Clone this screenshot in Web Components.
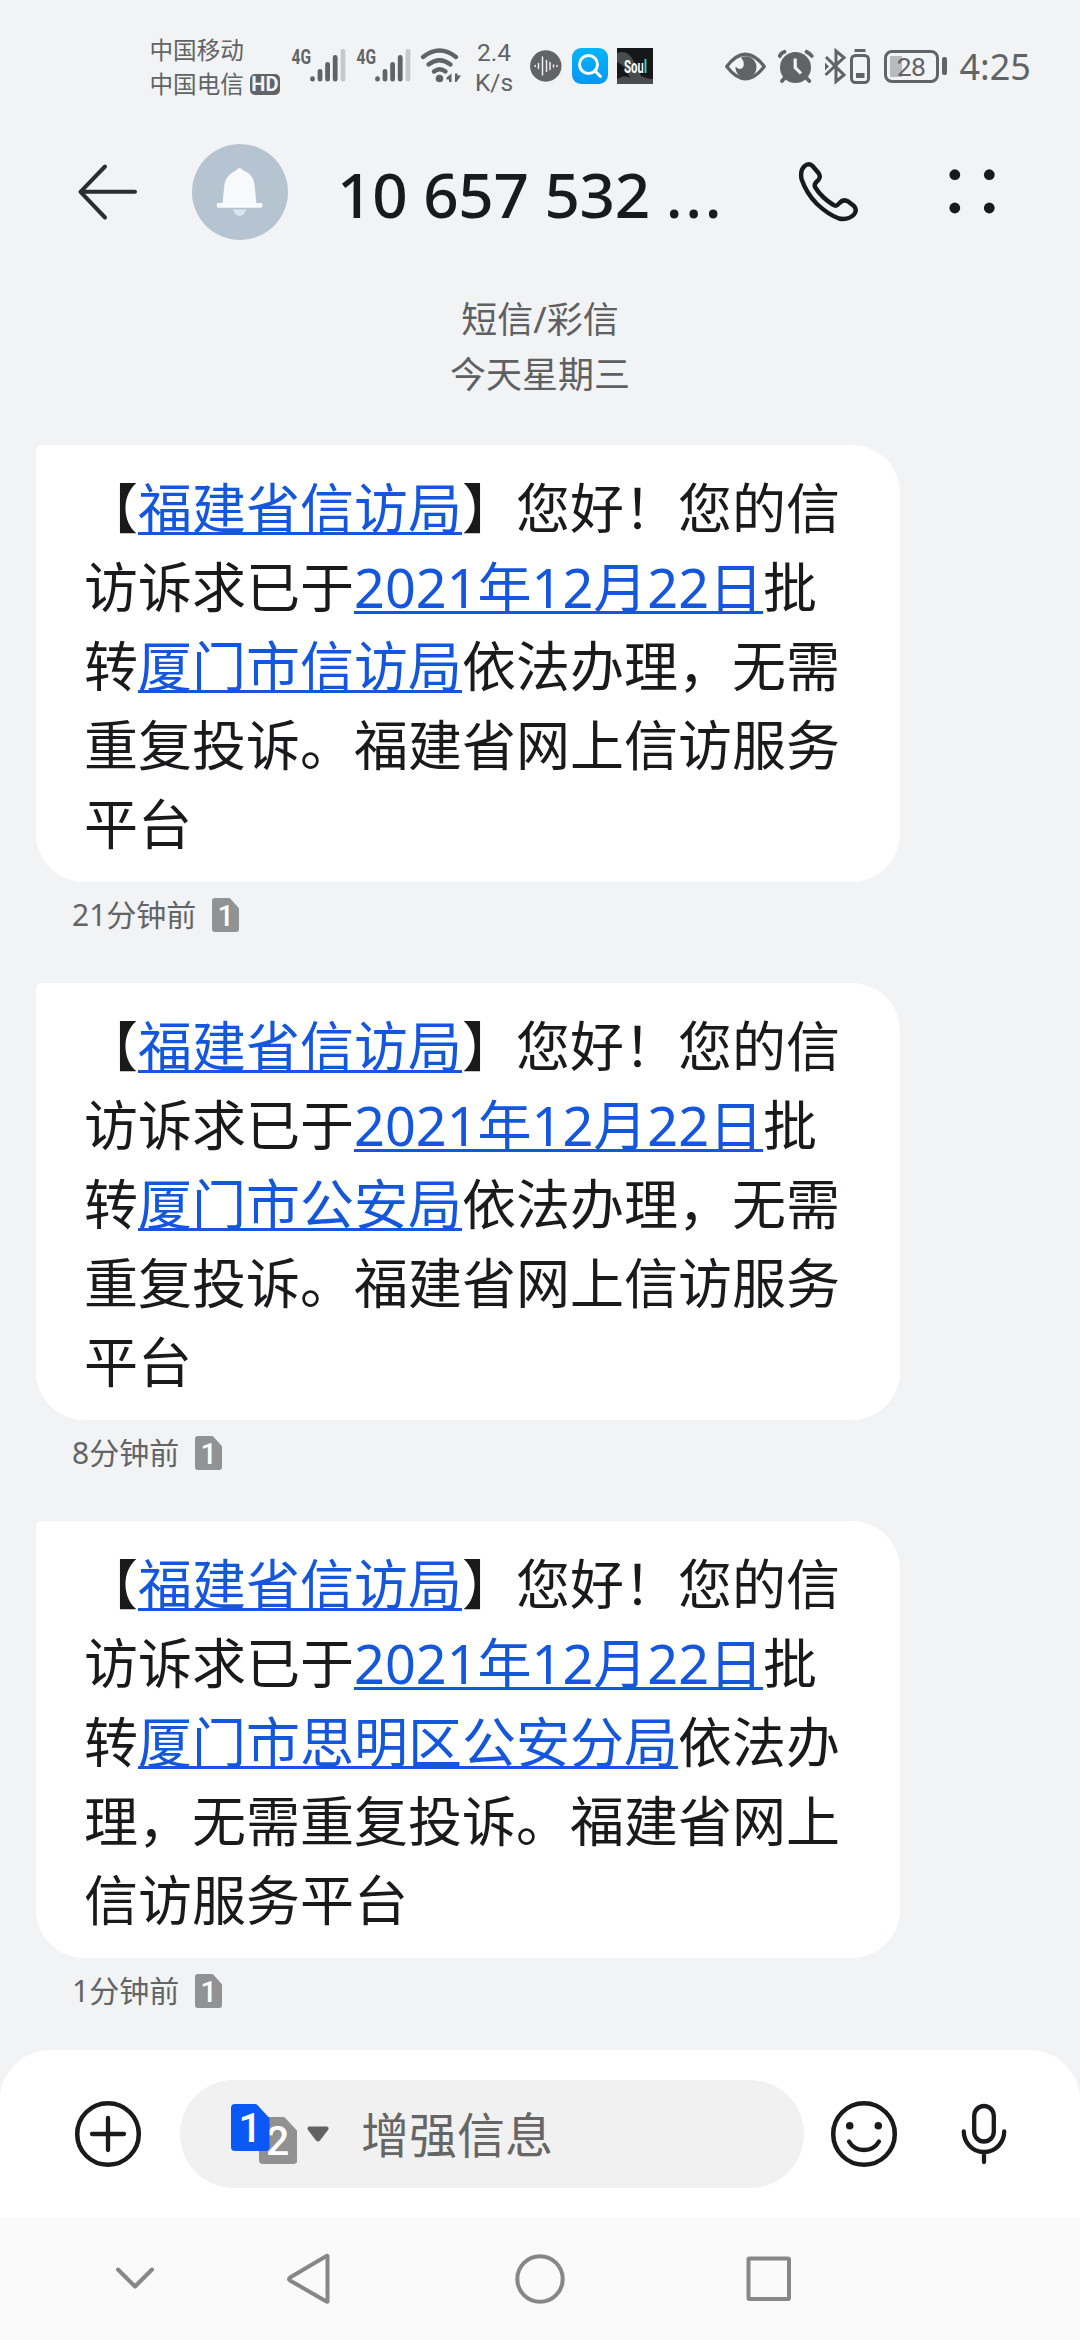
<!DOCTYPE html>
<html lang="zh-CN">
<head>
<meta charset="utf-8">
<title>10 657 532 ...</title>
<style>
html,body{margin:0;padding:0}
body{width:1080px;height:2340px;overflow:hidden;background:#f1f3f5;color:#191a1c;font-family:"Noto Sans","Noto Sans CJK SC",sans-serif;text-spacing-trim:space-all}
</style>
</head>
<body>
<sms-app></sms-app>
<script>
const define = (name, html) => {
  const t = document.createElement('template');
  t.innerHTML = html;
  customElements.define(name, class extends HTMLElement {
    constructor() {
      super();
      this.attachShadow({ mode: 'open' }).append(t.content.cloneNode(true));
    }
  });
};

/* Cellular signal meter with network label */
define('signal-meter', `
<style>:host{display:block;width:54px;height:36px}svg{display:block;overflow:visible}</style>
<svg width="54" height="36" viewBox="0 0 54 36">
  <text x="-.5" y="16" font-family="Roboto,sans-serif" font-weight="700" font-size="20.5" textLength="19.5" lengthAdjust="spacingAndGlyphs" fill="#626365">4G</text>
  <g stroke="#626365" stroke-width="4.8" stroke-linecap="round"><path d="M20.5 31.2V30.7M28 31.2V23.3M35.6 31.2V16.3M43.2 31.2V9.3"/><path d="M51 31.2V3.3" stroke="#c7c8ca"/></g>
</svg>`);

/* SIM card tag; --fill, --w, --h and --fs are set by the user of the element */
define('sim-tag', `
<style>
:host{display:block;width:var(--w,27px);height:var(--h,34px)}
svg{display:block;width:100%;height:100%}
.n{position:relative;margin-top:calc(var(--h,34px) * -1);height:var(--h,34px);line-height:calc(var(--h,34px) + 2px);text-align:center;color:#fff;font-family:Roboto,sans-serif;font-size:var(--fs,29px);font-weight:500}
</style>
<svg viewBox="0 0 38 47" preserveAspectRatio="none"><path d="M4 0H24Q25 0 26 1L37 13Q38 14 38 15V43Q38 47 34 47H4Q0 47 0 43V4Q0 0 4 0Z" fill="var(--fill,#919294)"/></svg>
<div class="n"><slot></slot></div>`);

define('status-bar', `
<style>
:host{display:flex;height:132px;align-items:flex-start;color:#626365;box-sizing:border-box}
svg{display:block;flex:none;overflow:visible}
.carriers{margin-left:149.5px;padding-top:33px;width:142.5px;flex:none;font-size:23.6px;line-height:34px;font-weight:400;white-space:nowrap}
.row{display:flex;align-items:center}
.hd{margin-left:6px;width:30px;height:21px;border-radius:5px;background:#626365;color:#f1f3f5;font:700 20px/21px Roboto,sans-serif;text-align:center}
signal-meter{margin-top:48px;flex:none}
.rate{margin-left:12px;width:42px;padding-top:38px;font:400 24.5px/29.5px Roboto,sans-serif;text-align:center;flex:none}
.i{margin-top:48px}
.pct{display:flex;flex:none;margin:50px 0 0 12.5px;width:55px;height:33px;box-sizing:border-box;border:3px solid #626365;border-radius:8px;background:linear-gradient(#b9babc,#b9babc) 3px 3px/12px 21px no-repeat;justify-content:center;font-family:Roboto,sans-serif;font-size:26.5px;line-height:28px;font-weight:400;letter-spacing:-.6px}
.nub{flex:none;width:4.5px;height:18px;border-radius:2px;background:#626365;margin:57px 0 0 3.5px}
.time{margin:42px 0 0 13px;font-size:36px;line-height:50px;font-weight:400}
</style>
<div class="carriers"><div>中国移动</div><div class="row">中国电信<div class="hd">HD</div></div></div>
<signal-meter></signal-meter>
<signal-meter style="margin-left:11px"></signal-meter>
<svg class="i" style="margin-left:9px" width="41" height="36" viewBox="420 48 41 36">
  <g fill="none" stroke="#626365" stroke-width="4.4" stroke-linecap="round"><path d="M423 57Q439.500 44 456 57M428.500 64.500Q439.500 56 450.500 64.500M434 71.500Q439.500 67 445.500 71.500"/></g>
  <circle cx="439.500" cy="78.500" r="3.800" fill="#626365"/><path d="M451.500 73.500V82H449V79.500H446.500V77.500ZM455 73.500H457.500V75.500H461L456.500 82H455Z" fill="#626365"/>
</svg>
<div class="rate">2.4<br>K/s</div>
<svg class="i" style="margin-left:15px" width="32" height="36" viewBox="530 48 32 36">
  <circle cx="545.800" cy="66" r="15.700" fill="#626365"/>
  <path d="M535.200 65.500V66.500M538.500 63.500V68.500M542.500 57V75M546.500 60.500V71.500M550 62.500V69.500M553.500 65V67M557 65.500V66.500" stroke="#eee" stroke-width="1.500" stroke-linecap="round"/>
</svg>
<svg class="i" style="margin-left:10px" width="36" height="36" viewBox="572 48 36 36">
  <defs><linearGradient id="g" x2="0" y2="1"><stop stop-color="#03b6fa"/><stop offset="1" stop-color="#0796f3"/></linearGradient></defs>
  <rect x="572" y="48" width="36" height="36" rx="9" fill="url(#g)"/><circle cx="588.500" cy="64.500" r="9" fill="none" stroke="#fff" stroke-width="3"/><path d="M595 71L600.500 76.500" stroke="#fff" stroke-width="3" stroke-linecap="round"/>
</svg>
<svg class="i" style="margin-left:9px" width="36" height="36" viewBox="0 0 36 36">
  <defs><linearGradient id="s" gradientUnits="userSpaceOnUse" x1="0" x2="36" y1="0" y2="0"><stop offset=".735" stop-color="#fff"/><stop offset=".735" stop-color="#35dcc9"/></linearGradient></defs>
  <path d="M0 0H36V36H0Z" fill="#161718"/><path d="M0 5Q9 2 14 9T24 28Q31 31 36 31V36H0V31Q8 26 13 30Q9 18 0 14Z" fill="#4a4b4c"/>
  <text x="7" y="25" font-family="Roboto,sans-serif" font-weight="700" font-size="18" fill="url(#s)" textLength="23" lengthAdjust="spacingAndGlyphs">Soul</text>
</svg>
<svg class="i" style="margin-left:72px" width="41" height="36" viewBox="725 48 41 36">
  <path d="M726.700 66.500Q745.500 42 764.300 66.500Q745.500 91 726.700 66.500Z" fill="none" stroke="#626365" stroke-width="3.300" stroke-linejoin="round"/>
  <path d="M741 57.500A10.500 11 0 1 1 735.500 66.500Q738.500 70.500 742.500 68Q746 64 741 57.500Z" fill="#626365"/>
</svg>
<svg class="i" style="margin-left:12px" width="36" height="36" viewBox="778 48 36 36">
  <circle cx="795.500" cy="67.500" r="15.500" fill="#626365"/>
  <path d="M779.800 56Q781 53 784.500 51.800M806.500 51.800Q810 53.500 811.800 56M785.500 77L782 81M805.500 77L809.300 81" stroke="#626365" stroke-width="3.800" stroke-linecap="round" fill="none"/>
  <path d="M795.200 58.500V67.500L801 73.500" stroke="#f1f3f5" stroke-width="3.200" fill="none"/>
</svg>
<svg class="i" style="margin-left:11px" width="46" height="36" viewBox="825 48 46 36">
  <path d="M826 57L844 75L836 81.500V51L844 57.500L825.500 75" fill="none" stroke="#626365" stroke-width="3"/><path d="M825 62.500L829 66.500L825 70.500Z" fill="#626365"/>
  <rect x="851.500" y="55.500" width="17" height="27" rx="4" fill="none" stroke="#626365" stroke-width="3"/><path d="M854.500 49H865.500V52H854.500ZM856 73H864.500V78H856Z" fill="#626365"/>
</svg>
<div class="pct">28</div><div class="nub"></div>
<div class="time">4:25</div>`);

define('chat-header', `
<style>
:host{display:flex;height:120px;align-items:center}
svg{display:block;flex:none}
.title{margin-left:49px;width:414px;font-size:62px;line-height:84px;font-weight:500;white-space:pre;padding-top:4px;letter-spacing:-.3px}
.d{letter-spacing:2.6px}
</style>
<svg style="margin-left:76px" width="62" height="62" viewBox="76 161 62 62"><path d="M105 166.500L80.500 191.800L105 217.500M80.500 191.800H135" fill="none" stroke="#2c2d30" stroke-width="4" stroke-linecap="round" stroke-linejoin="round"/></svg>
<svg style="margin-left:54px" width="96" height="96" viewBox="192 144 96 96">
  <circle cx="240" cy="192" r="48" fill="#b6c4d2"/>
  <path d="M236 170.500Q239.500 165.500 243.500 170.500Q253 174 254.500 184L256.300 203H261Q262.500 203 262.500 205.300T261 207.800H218.200Q216.700 207.800 216.700 205.300T218.200 203H222.600L224.500 184Q226 175 236 170.500Z" fill="#f8f9fb"/><path d="M233 209.500H246Q244.500 216 239.500 216T233 209.500Z" fill="#dbe5ef"/>
</svg>
<div class="title">10 657 532 <span class="d">...</span></div>
<svg style="margin-left:44px" width="64" height="64" viewBox="795 160 64 64"><path d="M812.500 166L818.500 173Q821.300 177 818 180.500Q813.300 184 815.300 187.500Q822 198 833.500 205Q836.500 207 839.500 203Q843.500 198.500 848.500 201.700L854 206Q857.500 210 854 214.500Q848 220.500 839 218.500Q828 214.500 817 204Q806.500 193.500 801.500 179Q800 170 804.500 166.200Q808.500 162.500 812.500 166Z" fill="none" stroke="#191a1c" stroke-width="4.400" stroke-linejoin="round"/></svg>
<svg style="margin-left:90px" width="46" height="50" viewBox="949 167 46 50"><g fill="#191a1c"><circle cx="954.800" cy="174.700" r="5.400"/><circle cx="989.300" cy="174.700" r="5.400"/><circle cx="954.800" cy="208" r="5.400"/><circle cx="989.300" cy="208" r="5.400"/></g></svg>`);

/* Incoming message: body in the default slot, age in the "age" slot */
define('sms-bubble', `
<style>
:host{display:block;height:538px}
.b{box-sizing:border-box;width:864px;height:437px;margin-left:36px;padding:24px 0 0 48px;background:#fff;border-radius:5px 48px 48px 48px;font-size:54px;line-height:79px;white-space:nowrap}
.m{display:flex;margin-left:72px;gap:16px;height:65px;align-items:center;color:#636466;font-size:30px;line-height:40px}
::slotted(a){color:#1456dc;text-decoration:underline 3px;text-underline-offset:3px;text-decoration-skip-ink:none}
</style>
<div class="b"><slot></slot></div>
<div class="m"><slot name="age"></slot><sim-tag>1</sim-tag></div>`);

define('compose-bar', `
<style>
:host{display:flex;height:168px;background:#fff;border-radius:50px 50px 0 0;align-items:center}
svg{display:block;flex:none}
.pill{display:flex;align-items:center;margin-left:38px;width:624px;height:108px;border-radius:54px;background:#f1f1f1;flex:none}
.sims{display:flex;margin-left:51px;height:60px;width:66px;--w:38.5px;--h:47px;--fs:41px}
.sims .one{--fill:#0a59f7;position:relative;z-index:1}
.sims .two{--fill:#919191;margin:13px 0 0 -11px}
.ph{margin-left:32px;font-size:48px;line-height:66px;color:#666;padding-top:1px}
</style>
<svg style="margin-left:74px" width="68" height="68" viewBox="-34 -34 68 68"><circle r="30.800" fill="none" stroke="#191a1c" stroke-width="4.500"/><path d="M0-16V16M-16 0H16" stroke="#191a1c" stroke-width="4.300" stroke-linecap="round"/></svg>
<div class="pill"><div class="sims"><sim-tag class="one">1</sim-tag><sim-tag class="two">2</sim-tag></div>
<svg style="margin-left:10px" width="22" height="16" viewBox="0 0 22 16"><path d="M2 .5H20Q22.500 1.500 21 4L13 14.500Q11 16.500 9 14.500L1 4Q-.5 1.500 2 .5Z" fill="#626262"/></svg>
<div class="ph">增强信息</div></div>
<svg style="margin-left:26px" width="68" height="68" viewBox="-34 -34 68 68"><circle r="30.800" fill="none" stroke="#191a1c" stroke-width="4.500"/><circle cx="-14.300" cy="-8.300" r="3.800" fill="#191a1c"/><circle cx="14.300" cy="-8.300" r="3.800" fill="#191a1c"/><path d="M-15 7.500Q-10 16 0 16T15 7.500" fill="none" stroke="#191a1c" stroke-width="4.300" stroke-linecap="round"/></svg>
<svg style="margin-left:62px" width="48" height="64" viewBox="-24 -32 48 64"><g fill="none" stroke="#191a1c" stroke-width="4.300" stroke-linecap="round"><rect x="-9.800" y="-28" width="19.600" height="35.500" rx="9.800"/><path d="M-20.200-2.500C-20.200 8-12 18 0 18S20.200 8 20.200-2.500M0 18V28"/></g></svg>`);

define('nav-bar', `
<style>:host{display:flex;height:122px;background:#fafafa}svg{display:block}</style>
<svg width="1080" height="122" viewBox="0 2218 1080 122"><g fill="none" stroke="#878787" stroke-width="4" stroke-linecap="round" stroke-linejoin="round"><path d="M118 2269.500L135 2286.500L152 2269.500M327.500 2256V2301.500Q327.500 2302 326 2301.200L290 2280.500Q288 2279 290 2277.500L326 2256.300Q327.500 2255.500 327.500 2256Z"/><circle cx="540" cy="2279" r="22.700"/><rect x="748.500" y="2258.500" width="40.500" height="40.500" rx="1"/></g></svg>`);

define('sms-app', `
<style>
:host{display:flex;flex-direction:column;width:1080px;height:2340px}
.cap{display:flex;flex-direction:column;align-items:center;height:193px;box-sizing:border-box;padding-top:40px;font-size:36px;line-height:55px;color:#5f6062}
.list{flex:1;min-height:0;overflow:hidden}
status-bar,chat-header,.cap,compose-bar,nav-bar{flex:none}
</style>
<status-bar></status-bar>
<chat-header></chat-header>
<div class="cap"><div>短信/彩信</div><div>今天星期三</div></div>
<div class="list">
<sms-bubble>【<a>福建省信访局</a>】您好！您的信<br>访诉求已于<a>2021年12月22日</a>批<br>转<a>厦门市信访局</a>依法办理，无需<br>重复投诉。福建省网上信访服务<br>平台<span slot="age">21分钟前</span></sms-bubble>
<sms-bubble>【<a>福建省信访局</a>】您好！您的信<br>访诉求已于<a>2021年12月22日</a>批<br>转<a>厦门市公安局</a>依法办理，无需<br>重复投诉。福建省网上信访服务<br>平台<span slot="age">8分钟前</span></sms-bubble>
<sms-bubble>【<a>福建省信访局</a>】您好！您的信<br>访诉求已于<a>2021年12月22日</a>批<br>转<a>厦门市思明区公安分局</a>依法办<br>理，无需重复投诉。福建省网上<br>信访服务平台<span slot="age">1分钟前</span></sms-bubble>
</div>
<compose-bar></compose-bar>
<nav-bar></nav-bar>`);
</script>
</body>
</html></script>
